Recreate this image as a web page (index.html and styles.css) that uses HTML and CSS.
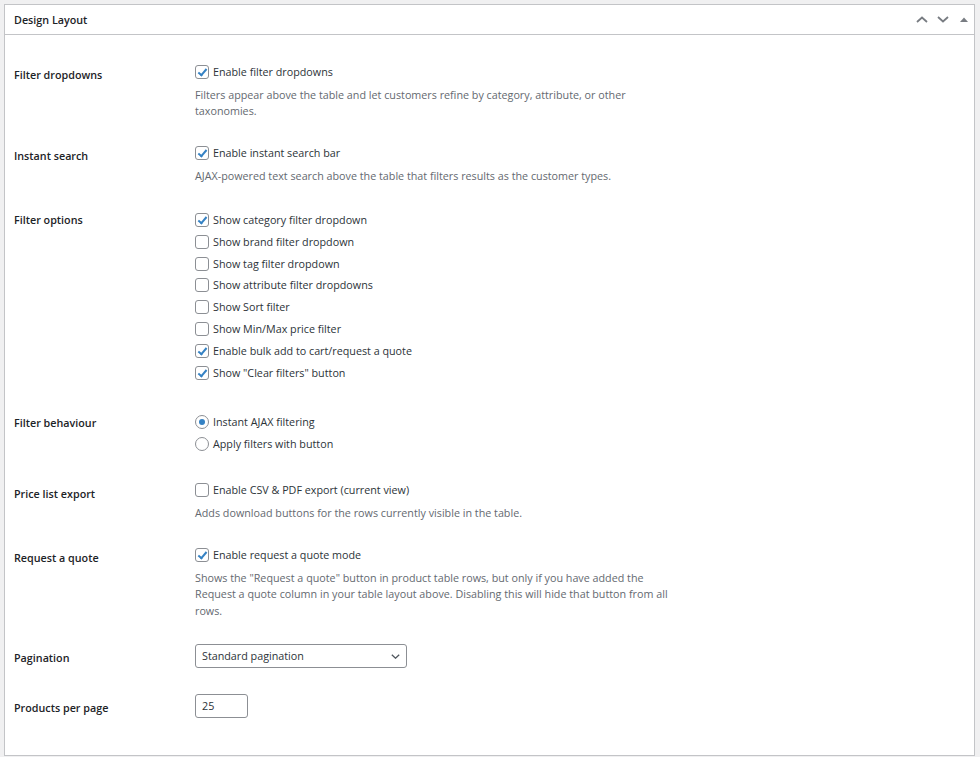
FILE: index.html
```html
<html lang="en">
<head>
    <meta charset="UTF-8">
    <title>Design Layout</title>
    <link rel="stylesheet" href="styles.css">
</head>
<body>

<div class="postbox">
    <div class="postbox-header">
        <h2>Design Layout</h2>
        <div class="handle-actions">
            <button class="handle" title="Move up">
                <svg width="12" height="7" viewBox="0 0 12 7"><path d="M1 6 L6 1.5 L11 6" /></svg>
            </button>
            <button class="handle" title="Move down">
                <svg width="12" height="7" viewBox="0 0 12 7"><path d="M1 1 L6 5.5 L11 1" /></svg>
            </button>
            <button class="handle toggle" title="Toggle panel">
                <svg width="8" height="5" viewBox="0 0 8 5"><polygon points="0,5 4,0.5 8,5" /></svg>
            </button>
        </div>
    </div>

    <div class="inside">
        <div class="row">
            <div class="row-label">Filter dropdowns</div>
            <div class="row-field">
                <label class="option"><input type="checkbox" checked> Enable filter dropdowns</label>
                <p class="description">Filters appear above the table and let customers refine by category, attribute, or other taxonomies.</p>
            </div>
        </div>

        <div class="row row--snug">
            <div class="row-label">Instant search</div>
            <div class="row-field">
                <label class="option"><input type="checkbox" checked> Enable instant search bar</label>
                <p class="description">AJAX-powered text search above the table that filters results as the customer types.</p>
            </div>
        </div>

        <div class="row">
            <div class="row-label row-label--flush">Filter options</div>
            <div class="row-field">
                <label class="option"><input type="checkbox" checked> Show category filter dropdown</label>
                <label class="option"><input type="checkbox"> Show brand filter dropdown</label>
                <label class="option"><input type="checkbox"> Show tag filter dropdown</label>
                <label class="option"><input type="checkbox"> Show attribute filter dropdowns</label>
                <label class="option"><input type="checkbox"> Show Sort filter</label>
                <label class="option"><input type="checkbox"> Show Min/Max price filter</label>
                <label class="option"><input type="checkbox" checked> Enable bulk add to cart/request a quote</label>
                <label class="option"><input type="checkbox" checked> Show "Clear filters" button</label>
            </div>
        </div>

        <div class="row row--loose">
            <div class="row-label row-label--high">Filter behaviour</div>
            <div class="row-field">
                <label class="option"><input type="radio" name="behaviour" checked> Instant AJAX filtering</label>
                <label class="option"><input type="radio" name="behaviour"> Apply filters with button</label>
            </div>
        </div>

        <div class="row">
            <div class="row-label">Price list export</div>
            <div class="row-field">
                <label class="option"><input type="checkbox"> Enable CSV &amp; PDF export (current view)</label>
                <p class="description">Adds download buttons for the rows currently visible in the table.</p>
            </div>
        </div>

        <div class="row row--snug">
            <div class="row-label">Request a quote</div>
            <div class="row-field">
                <label class="option"><input type="checkbox" checked> Enable request a quote mode</label>
                <p class="description">Shows the "Request a quote" button in product table rows, but only if you have added the Request a quote column in your table layout above. Disabling this will hide that button from all rows.</p>
            </div>
        </div>

        <div class="row">
            <div class="row-label">Pagination</div>
            <div class="row-field">
                <div class="select-wrap">
                    <select>
                        <option>Standard pagination</option>
                        <option>Load more button</option>
                        <option>Infinite scroll</option>
                    </select>
                    <svg class="select-arrow" width="9" height="5" viewBox="0 0 9 5"><path d="M0.8 0.8 L4.5 4.2 L8.2 0.8" /></svg>
                </div>
            </div>
        </div>

        <div class="row">
            <div class="row-label">Products per page</div>
            <div class="row-field">
                <input class="small-text" type="text" value="25">
            </div>
        </div>
    </div>
</div>

</body>
</html>
```
FILE: styles.css
```css
body {
    margin: 0;
    background-color: #f0f0f1;
    font-family: "Open Sans", "Noto Sans", sans-serif;
    font-size: 10.75px;
    color: #2c3338;
}

.postbox {
    margin: 4px 5px 0 4px;
    height: 750px;
    background-color: #ffffff;
    border: 1px solid #c3c4c7;
}

.postbox-header {
    display: flex;
    align-items: center;
    justify-content: space-between;
    height: 29px;
    border-bottom: 1px solid #c3c4c7;
    padding: 0 6px 0 9px;
}

.postbox-header h2 {
    margin: 0;
    font-size: 10.75px;
    font-weight: 600;
    color: #1d2327;
}

.handle-actions {
    display: flex;
    align-items: center;
    gap: 9px;
}

.handle {
    display: flex;
    align-items: center;
    justify-content: center;
    background: none;
    border: none;
    padding: 0;
    width: 12px;
    height: 12px;
}

.handle path {
    fill: none;
    stroke: #787c82;
    stroke-width: 1.8;
}

.handle.toggle {
    width: 8px;
    margin-left: 2px;
}

.handle polygon {
    fill: #787c82;
}

.inside {
    padding: 26px 9px 0 9px;
}

.row {
    display: flex;
    margin-top: 25px;
}

.row:first-child {
    margin-top: 0;
}

.row--snug {
    margin-top: 22px;
}

.row--loose {
    margin-top: 27.5px;
}

.row-label {
    width: 181px;
    flex-shrink: 0;
    padding-top: 3px;
    line-height: 22px;
    font-weight: 600;
    color: #1d2327;
}

.row-label--flush {
    padding-top: 0;
}

.row-label--high {
    padding-top: 1px;
}

.row-field {
    display: flex;
    flex-direction: column;
    align-items: flex-start;
}

.option {
    display: flex;
    align-items: center;
    gap: 4px;
    height: 21.8px;
    color: #2c3338;
}

.option input {
    appearance: none;
    -webkit-appearance: none;
    margin: 0;
    width: 14px;
    height: 14px;
    border: 1px solid #8c8f94;
    background-color: #ffffff;
    position: relative;
}

.option input[type="checkbox"] {
    border-radius: 3px;
}

.option input[type="checkbox"]:checked::before {
    content: "";
    position: absolute;
    left: 4px;
    top: 1px;
    width: 3px;
    height: 7px;
    border-right: 2px solid #3582c4;
    border-bottom: 2px solid #3582c4;
    transform: rotate(40deg);
}

.option input[type="radio"] {
    border-radius: 50%;
}

.option input[type="radio"]:checked::before {
    content: "";
    position: absolute;
    left: 3px;
    top: 3px;
    width: 6px;
    height: 6px;
    border-radius: 50%;
    background-color: #3582c4;
}

.description {
    margin: 4px 0 0 0;
    max-width: 491px;
    line-height: 16.5px;
    color: #646970;
}

.select-wrap {
    position: relative;
}

select {
    appearance: none;
    -webkit-appearance: none;
    width: 212px;
    height: 24px;
    padding: 0 24px 0 6px;
    border: 1px solid #8c8f94;
    border-radius: 3px;
    background-color: #ffffff;
    font-family: "Open Sans", "Noto Sans", sans-serif;
    font-size: 10.75px;
    color: #2c3338;
}

.select-arrow {
    position: absolute;
    right: 7px;
    top: 10px;
}

.select-arrow path {
    fill: none;
    stroke: #50575e;
    stroke-width: 1.3;
}

.small-text {
    width: 53px;
    height: 24px;
    box-sizing: border-box;
    padding: 0 6px;
    border: 1px solid #8c8f94;
    border-radius: 3px;
    font-family: "Open Sans", "Noto Sans", sans-serif;
    font-size: 10.75px;
    color: #2c3338;
}
```
